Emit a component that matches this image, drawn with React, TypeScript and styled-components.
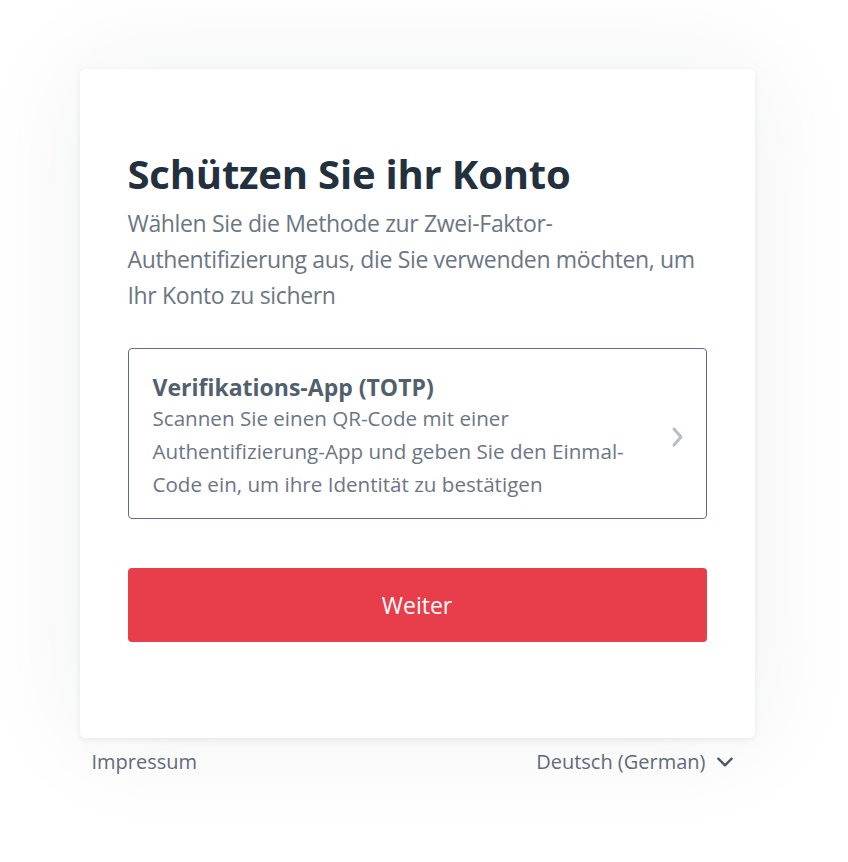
import React from "react";
import styled, { createGlobalStyle } from "styled-components";

const Global = createGlobalStyle`
  html, body { margin: 0; padding: 0; background: #ffffff; }
  body { font-family: "Open Sans", "Noto Sans", sans-serif; }
  * { box-sizing: border-box; }
`;

const Page = styled.div`
  min-height: 862px;
  display: flex;
  flex-direction: column;
  align-items: center;
  padding: 69px 14px 0 0;
`;

const Wrapper = styled.div`
  width: 675px;
  display: flex;
  flex-direction: column;
`;

const Card = styled.main`
  background: #fff;
  border-radius: 6px;
  box-shadow: 0 2px 6px rgba(30, 40, 60, 0.08), 0 0 110px rgba(30, 40, 60, 0.07);
  padding: 78px 48px 96px;
  display: flex;
  flex-direction: column;
`;

const Title = styled.h1`
  margin: 0;
  font-size: 40px;
  font-weight: 700;
  line-height: 54px;
  color: #23303e;
  letter-spacing: -0.2px;
`;

const Subtitle = styled.p`
  margin: 4px 0 0;
  font-size: 23px;
  line-height: 36px;
  color: #6b7684;
  letter-spacing: -0.35px;
`;

const Option = styled.button`
  margin-top: 35px;
  width: 100%;
  border: 1px solid #5f6e7e;
  border-radius: 4px;
  background: #fff;
  padding: 23px 17px 17px 24px;
  display: flex;
  align-items: center;
  gap: 10px;
  text-align: left;
  cursor: pointer;
  font-family: inherit;
`;

const OptionText = styled.div`
  flex: 1;
  display: flex;
  flex-direction: column;
  padding-right: 10px;
`;

const OptionTitle = styled.span`
  font-size: 23px;
  font-weight: 700;
  line-height: 30px;
  color: #525f6d;
`;

const OptionDesc = styled.span`
  font-size: 20.6px;
  line-height: 33px;
  color: #6b7684;
`;

const Chevron = styled.svg`
  width: 24px;
  height: 24px;
  flex-shrink: 0;
  color: #b8bec6;
`;

const PrimaryButton = styled.button`
  margin-top: 49px;
  width: 100%;
  height: 74px;
  border: none;
  border-radius: 4px;
  background: #e83e4c;
  color: #fff;
  font-family: inherit;
  font-size: 23px;
  cursor: pointer;
`;

const Footer = styled.footer`
  display: flex;
  justify-content: space-between;
  align-items: center;
  padding: 10px 20px 0 12px;
  font-size: 20px;
  color: #5f6b79;
`;

const LangSelect = styled.div`
  display: flex;
  align-items: center;
  gap: 9px;
`;

export default function App() {
  return (
    <>
      <Global />
      <Page>
        <Wrapper>
          <Card>
            <Title>Schützen Sie ihr Konto</Title>
            <Subtitle>
              Wählen Sie die Methode zur Zwei-Faktor-Authentifizierung aus, die Sie verwenden möchten, um Ihr Konto zu sichern
            </Subtitle>
            <Option>
              <OptionText>
                <OptionTitle>Verifikations-App (TOTP)</OptionTitle>
                <OptionDesc>
                  Scannen Sie einen QR-Code mit einer Authentifizierung-App und geben Sie den Einmal-Code ein, um ihre Identität zu bestätigen
                </OptionDesc>
              </OptionText>
              <Chevron viewBox="0 0 24 24" fill="none" stroke="currentColor" strokeWidth="3" strokeLinecap="round" strokeLinejoin="round">
                <path d="M9 4l7 8-7 8" />
              </Chevron>
            </Option>
            <PrimaryButton>Weiter</PrimaryButton>
          </Card>
          <Footer>
            <span>Impressum</span>
            <LangSelect>
              <span>Deutsch (German)</span>
              <svg width="20" height="20" viewBox="0 0 24 24" fill="none" stroke="#4a5766" strokeWidth="2.8" strokeLinecap="round" strokeLinejoin="round">
                <path d="M4 8l8 8 8-8" />
              </svg>
            </LangSelect>
          </Footer>
        </Wrapper>
      </Page>
    </>
  );
}
